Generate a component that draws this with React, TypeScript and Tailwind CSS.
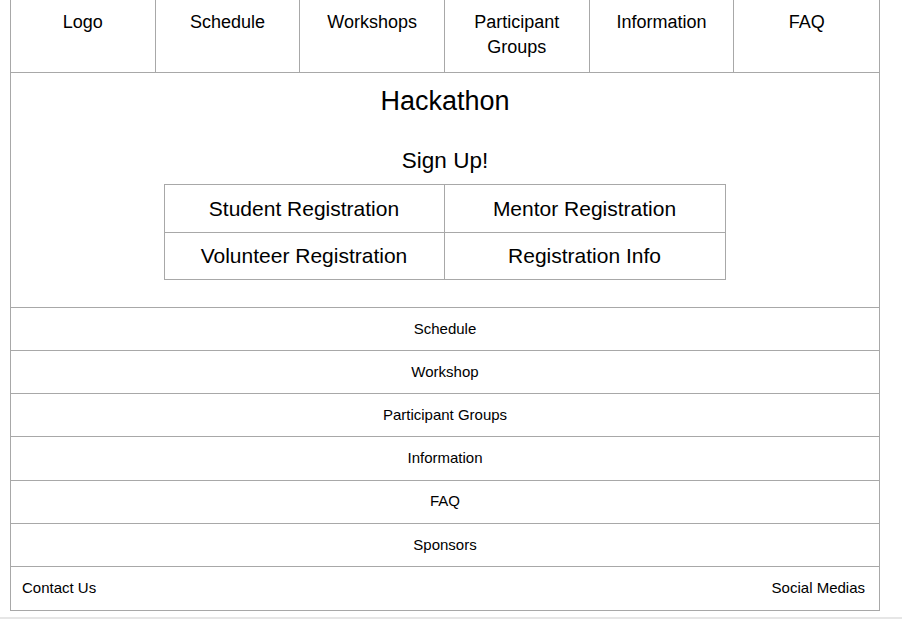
const navItems = ['Logo', 'Schedule', 'Workshops', 'Participant Groups', 'Information', 'FAQ'];
const registrations = ['Student Registration', 'Mentor Registration', 'Volunteer Registration', 'Registration Info'];
const sections = ['Schedule', 'Workshop', 'Participant Groups', 'Information', 'FAQ', 'Sponsors'];

export default function App() {
  return (
    <div className="min-h-screen bg-white text-black" style={{ fontFamily: '"Liberation Sans", Arial, sans-serif' }}>
      <div className="ml-[10px] w-[870px] border-x border-b border-[#a8a8a8]">
        <nav className="grid grid-cols-6 h-[73px] border-b border-[#a8a8a8]">
          {navItems.map((item, i) => (
            <div
              key={item}
              className={`pt-[10px] px-2 text-center text-[18px] leading-[25px] ${i < navItems.length - 1 ? 'border-r border-[#a8a8a8]' : ''}`}
            >
              {item}
            </div>
          ))}
        </nav>

        <section className="flex flex-col items-center pt-[12px] pb-[27px]">
          <h1 className="text-[27px] leading-[32px]">Hackathon</h1>
          <h2 className="mt-[30px] text-[22.5px] leading-[28px]">Sign Up!</h2>
          <div className="mt-[9px] ml-[-1px] grid grid-cols-2 w-[562px] border border-[#a8a8a8]">
            {registrations.map((r, i) => (
              <div
                key={r}
                className={`h-[47px] flex items-center justify-center text-[21px] ${i % 2 === 0 ? 'border-r border-[#a8a8a8]' : ''} ${i >= 2 ? 'border-t border-[#a8a8a8]' : ''}`}
              >
                {r}
              </div>
            ))}
          </div>
        </section>

        {sections.map((s) => (
          <div key={s} className="h-[43.17px] flex items-center justify-center border-t border-[#a8a8a8] text-[15px]">
            {s}
          </div>
        ))}

        <footer className="h-[44px] flex items-center justify-between border-t border-[#a8a8a8] pl-[11px] pr-[14px] text-[15px]">
          <span>Contact Us</span>
          <span>Social Medias</span>
        </footer>
      </div>
      <div className="mt-[6px] h-[2px] bg-[#e6e6e6]" />
    </div>
  );
}
